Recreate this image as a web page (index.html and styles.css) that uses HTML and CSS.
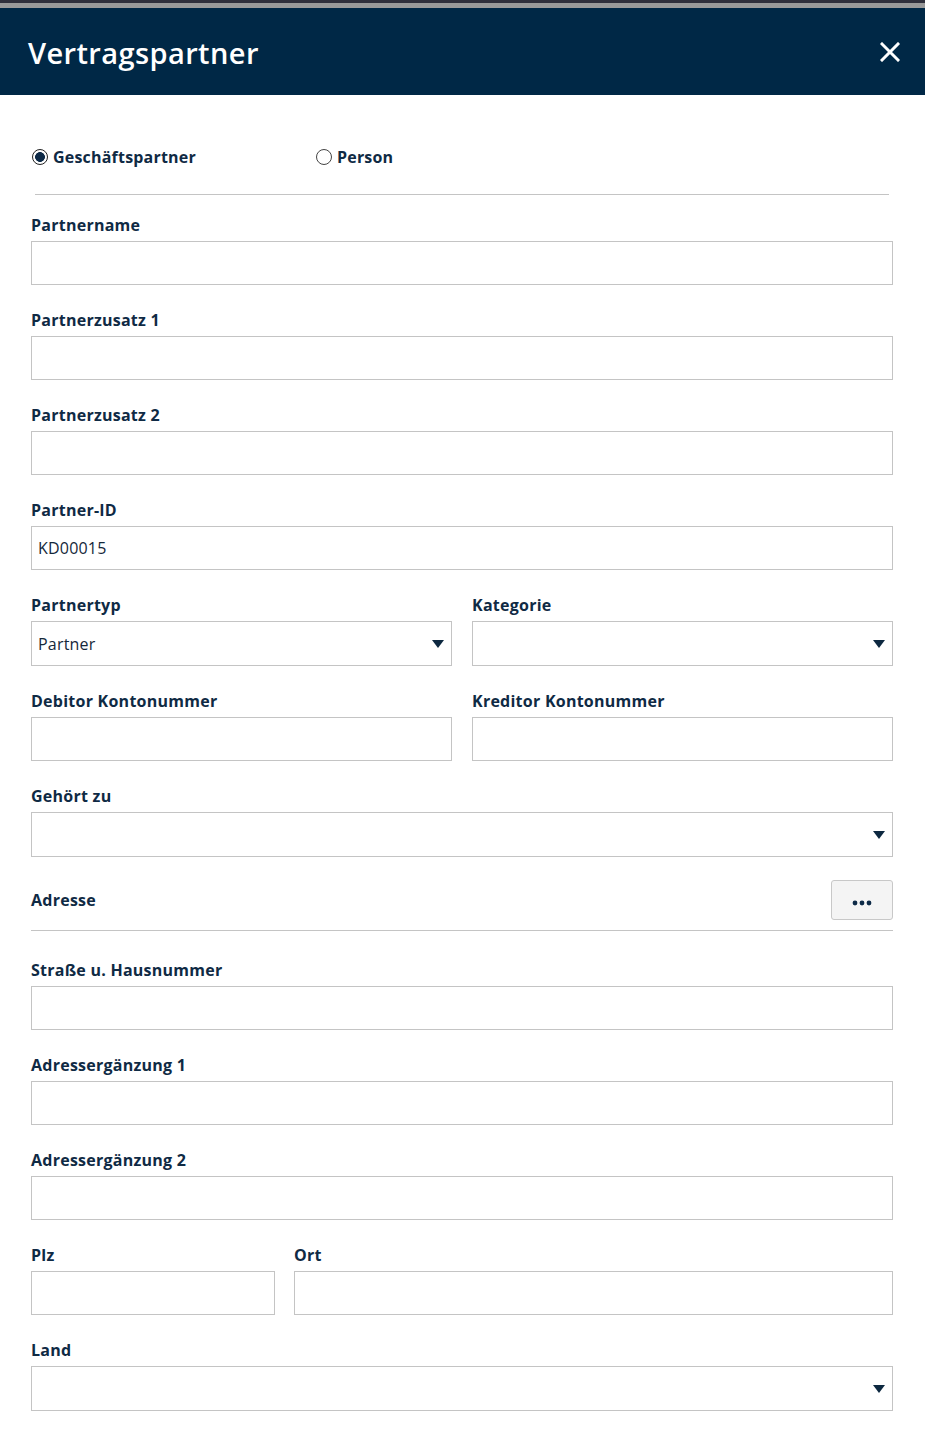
FILE: index.html
```html
<!DOCTYPE html>
<html lang="de">
<head>
<meta charset="utf-8">
<title>Vertragspartner</title>
<link rel="stylesheet" href="styles.css">
</head>
<body>
<div class="topstrip"></div>
<header class="header">
  <h1 class="title">Vertragspartner</h1>
  <button class="close" aria-label="Schließen">
    <svg width="20" height="20" viewBox="0 0 20 20"><path d="M2 2 L18 18 M18 2 L2 18" stroke="#fff" stroke-width="3" stroke-linecap="square"/></svg>
  </button>
</header>
<main class="form">
  <div class="radios">
    <label class="radio"><span class="circle checked"></span>Geschäftspartner</label>
    <label class="radio"><span class="circle"></span>Person</label>
  </div>
  <div class="divider inset"></div>

  <div class="field">
    <div class="label">Partnername</div>
    <div class="input"></div>
  </div>
  <div class="field">
    <div class="label">Partnerzusatz 1</div>
    <div class="input"></div>
  </div>
  <div class="field">
    <div class="label">Partnerzusatz 2</div>
    <div class="input"></div>
  </div>
  <div class="field">
    <div class="label">Partner-ID</div>
    <div class="input">KD00015</div>
  </div>
  <div class="row two">
    <div class="field">
      <div class="label">Partnertyp</div>
      <div class="input select">Partner<span class="arrow"></span></div>
    </div>
    <div class="field">
      <div class="label">Kategorie</div>
      <div class="input select"><span class="arrow"></span></div>
    </div>
  </div>
  <div class="row two">
    <div class="field">
      <div class="label">Debitor Kontonummer</div>
      <div class="input"></div>
    </div>
    <div class="field">
      <div class="label">Kreditor Kontonummer</div>
      <div class="input"></div>
    </div>
  </div>
  <div class="field last">
    <div class="label">Gehört zu</div>
    <div class="input select"><span class="arrow"></span></div>
  </div>

  <div class="section">
    <div class="label">Adresse</div>
    <button class="more" aria-label="Mehr">
      <svg width="20" height="6" viewBox="0 0 20 6"><circle cx="3" cy="3" r="2.4" fill="#0d2a47"/><circle cx="10" cy="3" r="2.4" fill="#0d2a47"/><circle cx="17" cy="3" r="2.4" fill="#0d2a47"/></svg>
    </button>
  </div>
  <div class="divider full"></div>

  <div class="field">
    <div class="label">Straße u. Hausnummer</div>
    <div class="input"></div>
  </div>
  <div class="field">
    <div class="label">Adressergänzung 1</div>
    <div class="input"></div>
  </div>
  <div class="field">
    <div class="label">Adressergänzung 2</div>
    <div class="input"></div>
  </div>
  <div class="row plz">
    <div class="field">
      <div class="label">Plz</div>
      <div class="input"></div>
    </div>
    <div class="field">
      <div class="label">Ort</div>
      <div class="input"></div>
    </div>
  </div>
  <div class="field">
    <div class="label">Land</div>
    <div class="input select"><span class="arrow"></span></div>
  </div>
</main>
</body>
</html>
```

FILE: styles.css
```css
* { box-sizing: border-box; }
body {
  margin: 0;
  background: #fff;
  font-family: "Open Sans", "Noto Sans", "Liberation Sans", sans-serif;
  color: #0f2a44;
}
.topstrip {
  height: 8px;
  background: #9a9a9a;
  border-top: 3px solid #30303c;
}
.header {
  height: 87px;
  background: #002846;
  display: flex;
  align-items: center;
  justify-content: space-between;
  padding: 0 25px 0 28px;
}
.title {
  margin: 0;
  color: #fff;
  font-size: 29px;
  font-weight: 600;
  letter-spacing: 0.4px;
  padding-top: 2px;
}
.close {
  background: none;
  border: 0;
  padding: 0;
  width: 20px;
  height: 20px;
  margin-top: 1px;
  display: flex;
}
.form {
  padding: 50px 32px 30px 31px;
}
.radios {
  display: grid;
  grid-template-columns: 284px auto;
  height: 24px;
  align-items: center;
  padding-left: 1px;
}
.radio {
  display: flex;
  align-items: center;
  gap: 5px;
  font-size: 16px;
  font-weight: 700;
  line-height: 24px;
  letter-spacing: 0.2px;
}
.circle {
  width: 16px;
  height: 16px;
  border-radius: 50%;
  border: 1px solid #444;
  background: #fff;
  flex: none;
}
.circle.checked {
  border: 1.5px solid #222;
  background: radial-gradient(circle, #0d2a47 0 4.6px, #fff 5.2px);
}
.divider {
  height: 1px;
  background: #c4c4c4;
}
.divider.inset {
  margin: 25px 4px 19px 4px;
}
.divider.full {
  margin: 10px 0 28px 0;
}
.field {
  display: flex;
  flex-direction: column;
  margin-bottom: 24px;
}
.field.last { margin-bottom: 23px; }
.row .field { margin-bottom: 0; }
.row { margin-bottom: 24px; display: grid; }
.row.two { grid-template-columns: 1fr 1fr; column-gap: 20px; }
.row.plz { grid-template-columns: 244px 1fr; column-gap: 19px; }
.label {
  font-size: 16px;
  font-weight: 700;
  line-height: 22px;
  margin-bottom: 5px;
  letter-spacing: 0.25px;
}
.input {
  height: 44px;
  border: 1px solid #c4c4c4;
  background: #fff;
  font-size: 16px;
  font-weight: 400;
  color: #15283a;
  padding: 0 6px;
  display: flex;
  align-items: center;
  position: relative;
  letter-spacing: 0.2px;
}
.input.select { height: 45px; }
.arrow {
  position: absolute;
  right: 7px;
  top: 18px;
  width: 0;
  height: 0;
  border-left: 6px solid transparent;
  border-right: 6px solid transparent;
  border-top: 8px solid #0d2840;
}
.section {
  display: flex;
  justify-content: space-between;
  align-items: center;
  height: 40px;
}
.section .label { margin: 0; }
.more {
  width: 62px;
  height: 40px;
  background: #f4f4f4;
  border: 1px solid #c8c8c8;
  border-radius: 3px;
  padding: 6px 0 0 0;
  display: flex;
  align-items: center;
  justify-content: center;
}
```
